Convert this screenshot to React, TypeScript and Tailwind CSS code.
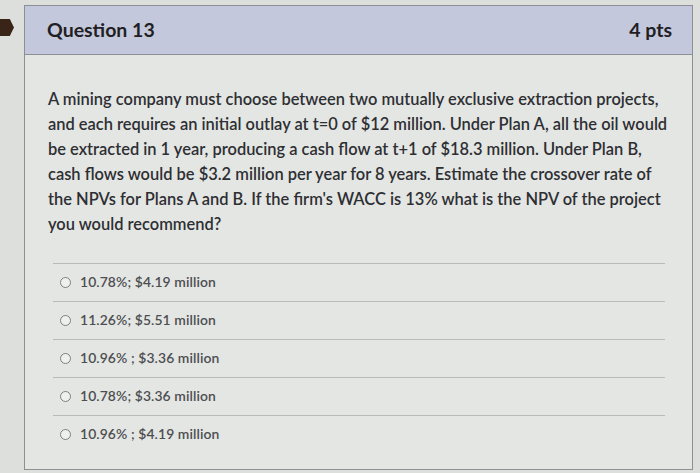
const OPTIONS = [
  "10.78%; $4.19 million",
  "11.26%; $5.51 million",
  "10.96% ; $3.36 million",
  "10.78%; $3.36 million",
  "10.96% ; $4.19 million",
];

const QUESTION_LINES = [
  "A mining company must choose between two mutually exclusive extraction projects,",
  "and each requires an initial outlay at t=0 of $12 million. Under Plan A, all the oil would",
  "be extracted in 1 year, producing a cash flow at t+1 of $18.3 million. Under Plan B,",
  "cash flows would be $3.2 million per year for 8 years. Estimate the crossover rate of",
  "the NPVs for Plans A and B. If the firm's WACC is 13% what is the NPV of the project",
  "you would recommend?",
];

export default function App() {
  return (
    <div
      className="relative h-[473px] w-[700px] overflow-hidden bg-[#dcdfdb] pt-[5px]"
      style={{ fontFamily: "Lato, 'Open Sans', sans-serif" }}
    >
      <div className="absolute left-0 top-[19px] h-[17px] w-[14px] bg-[#3a2418] [clip-path:polygon(0_0,70%_0,100%_50%,70%_100%,0_100%)]" />
      <div className="ml-[24px] w-[669px] border border-[#8c8f94] bg-[#e4e6e3]">
        <div className="flex h-[49px] items-center justify-between border-b border-[#8c8f94] bg-[#c4c8dc] pl-[22px] pr-[20px] text-[19.5px] font-bold text-[#1f1f24]">
          <span>Question 13</span>
          <span>4 pts</span>
        </div>
        <div className="px-[23px] pb-[16px] pt-[32px]">
          <p className="whitespace-nowrap text-[16.45px] leading-[25px] font-semibold text-[#2e2f33]">
            {QUESTION_LINES.map((line) => (
              <span key={line} className="block">
                {line}
              </span>
            ))}
          </p>
          <div className="ml-[5px] mt-[26px] w-[612px]">
            {OPTIONS.map((opt) => (
              <div
                key={opt}
                className="flex h-[38px] items-center gap-[9px] border-t border-[#b9bbb8] pl-[7px]"
              >
                <span className="h-[11px] w-[11px] rounded-full border border-[#7d8080] bg-[#eef0ed]" />
                <span className="text-[13.9px] font-semibold tracking-[0.1px] text-[#4d4e51]">{opt}</span>
              </div>
            ))}
          </div>
        </div>
      </div>
    </div>
  );
}
